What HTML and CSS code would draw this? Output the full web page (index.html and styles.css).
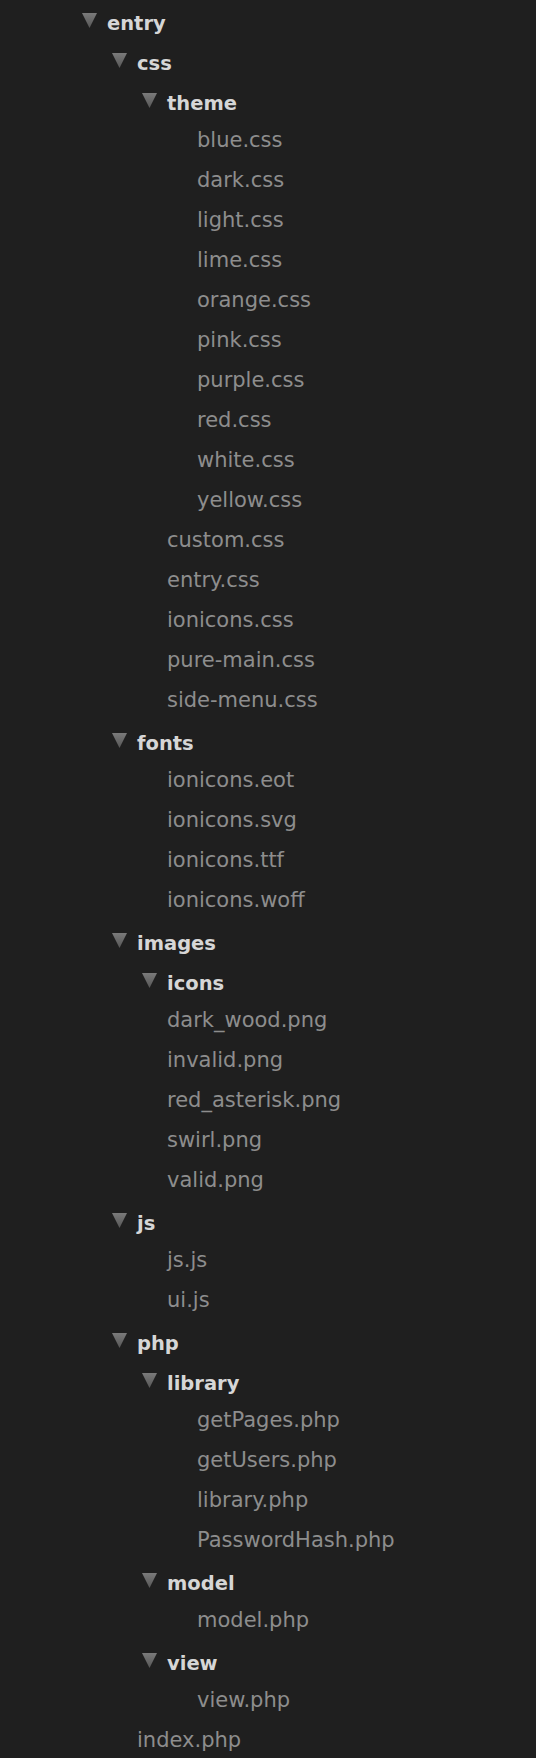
FILE: index.html
```html
<!DOCTYPE html>
<html lang="en">
<head>
<meta charset="utf-8">
<title>Sidebar tree</title>
<link rel="stylesheet" href="styles.css">
</head>
<body>
<ul class="tree root">
  <li><div class="row folder"><span class="arrow"></span><span class="name">entry</span></div>
    <ul class="tree">
      <li><div class="row folder"><span class="arrow"></span><span class="name">css</span></div>
        <ul class="tree">
          <li><div class="row folder"><span class="arrow"></span><span class="name">theme</span></div>
            <ul class="tree">
              <li><div class="row file">blue.css</div></li>
              <li><div class="row file">dark.css</div></li>
              <li><div class="row file">light.css</div></li>
              <li><div class="row file">lime.css</div></li>
              <li><div class="row file">orange.css</div></li>
              <li><div class="row file">pink.css</div></li>
              <li><div class="row file">purple.css</div></li>
              <li><div class="row file">red.css</div></li>
              <li><div class="row file">white.css</div></li>
              <li><div class="row file">yellow.css</div></li>
            </ul>
          </li>
          <li><div class="row file">custom.css</div></li>
          <li><div class="row file">entry.css</div></li>
          <li><div class="row file">ionicons.css</div></li>
          <li><div class="row file">pure-main.css</div></li>
          <li><div class="row file">side-menu.css</div></li>
        </ul>
      </li>
      <li><div class="row folder"><span class="arrow"></span><span class="name">fonts</span></div>
        <ul class="tree">
          <li><div class="row file">ionicons.eot</div></li>
          <li><div class="row file">ionicons.svg</div></li>
          <li><div class="row file">ionicons.ttf</div></li>
          <li><div class="row file">ionicons.woff</div></li>
        </ul>
      </li>
      <li><div class="row folder"><span class="arrow"></span><span class="name">images</span></div>
        <ul class="tree">
          <li><div class="row folder"><span class="arrow"></span><span class="name">icons</span></div></li>
          <li><div class="row file">dark_wood.png</div></li>
          <li><div class="row file">invalid.png</div></li>
          <li><div class="row file">red_asterisk.png</div></li>
          <li><div class="row file">swirl.png</div></li>
          <li><div class="row file">valid.png</div></li>
        </ul>
      </li>
      <li><div class="row folder"><span class="arrow"></span><span class="name">js</span></div>
        <ul class="tree">
          <li><div class="row file">js.js</div></li>
          <li><div class="row file">ui.js</div></li>
        </ul>
      </li>
      <li><div class="row folder"><span class="arrow"></span><span class="name">php</span></div>
        <ul class="tree">
          <li><div class="row folder"><span class="arrow"></span><span class="name">library</span></div>
            <ul class="tree">
              <li><div class="row file">getPages.php</div></li>
              <li><div class="row file">getUsers.php</div></li>
              <li><div class="row file">library.php</div></li>
              <li><div class="row file">PasswordHash.php</div></li>
            </ul>
          </li>
          <li><div class="row folder"><span class="arrow"></span><span class="name">model</span></div>
            <ul class="tree">
              <li><div class="row file">model.php</div></li>
            </ul>
          </li>
          <li><div class="row folder"><span class="arrow"></span><span class="name">view</span></div>
            <ul class="tree">
              <li><div class="row file">view.php</div></li>
            </ul>
          </li>
        </ul>
      </li>
      <li><div class="row file">index.php</div></li>
    </ul>
  </li>
</ul>
</body>
</html>
```

FILE: styles.css
```css
html, body {
  margin: 0;
  padding: 0;
  background: #1f1f1f;
}

body {
  font-family: "DejaVu Sans", Verdana, sans-serif;
  font-size: 21px;
  color: #8d8d8d;
  overflow: hidden;
}

.tree {
  list-style: none;
  margin: 0;
  padding: 0 0 0 30px;
}

.tree.root {
  padding-left: 107px;
}

.row {
  height: 40px;
  display: flex;
  align-items: center;
  white-space: nowrap;
}

.file {
  color: #8d8d8d;
}

.folder {
  margin-left: -25px;
  gap: 10px;
}

.folder .name {
  font-weight: bold;
  font-size: 19.5px;
  color: #d6d6d6;
  padding-top: 6px;
}

.arrow {
  width: 15px;
  height: 15px;
  margin-top: 1px;
  flex: none;
  background: linear-gradient(#7a7a7a, #565656);
  clip-path: polygon(0 0, 100% 0, 50% 100%);
}
```
